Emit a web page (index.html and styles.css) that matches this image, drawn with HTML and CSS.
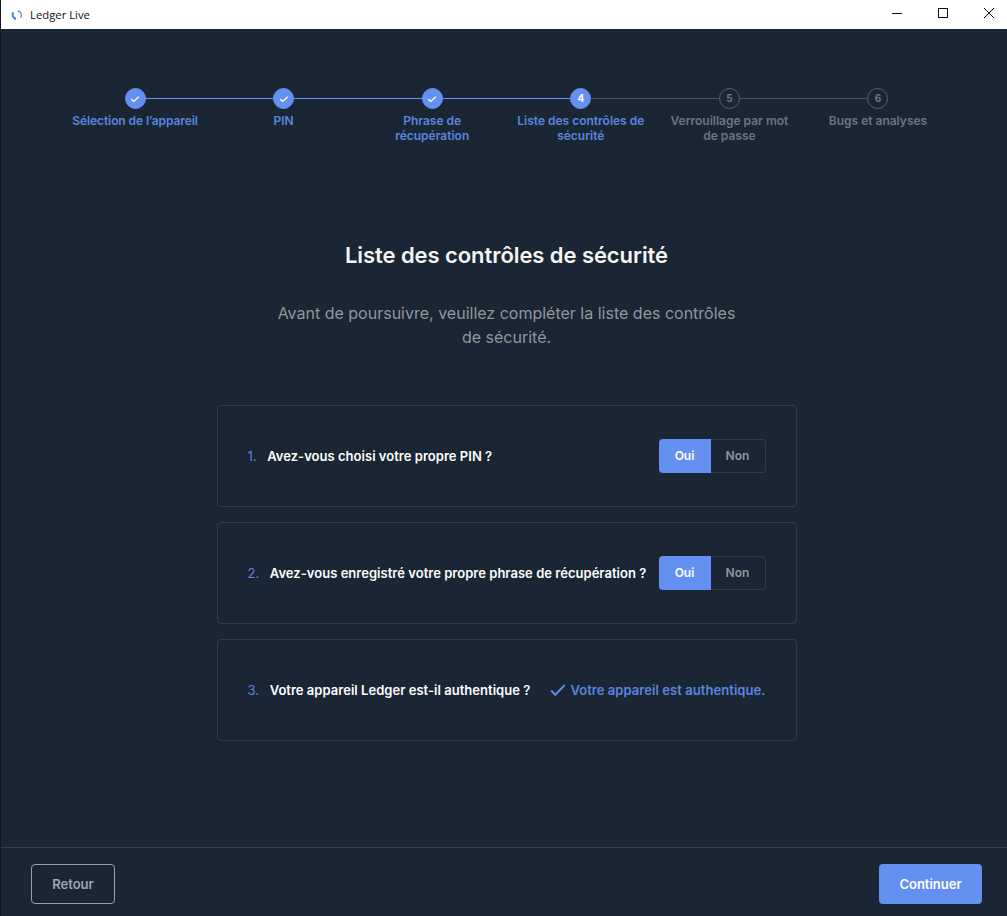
FILE: index.html
```html
<!DOCTYPE html>
<html lang="fr">
<head>
  <meta charset="UTF-8" />
  <meta name="viewport" content="width=device-width, initial-scale=1.0"/>
  <title>Ledger Live</title>
  <link rel="stylesheet" href="styles.css">
</head>
<body>
  <header class="titlebar">
    <div class="titlebar-left">
      <svg class="app-logo" width="12" height="12" viewBox="0 0 12 12" fill="none">
        <path d="M7 2A4.2 4.2 0 0 1 9.6 8.6" stroke="#6f8fd0" stroke-width="1.3"/>
        <path d="M5 10A4.2 4.2 0 0 1 2.4 3.4" stroke="#3f73d8" stroke-width="1.8"/>
      </svg>
      <span>Ledger Live</span>
    </div>
    <div class="window-controls">
      <svg width="12" height="12" viewBox="0 0 12 12"><path d="M1 6.5h10" stroke="#111" stroke-width="1"/></svg>
      <svg width="12" height="12" viewBox="0 0 12 12"><rect x="1.5" y="1.5" width="9" height="9" fill="none" stroke="#111"/></svg>
      <svg width="12" height="12" viewBox="0 0 12 12"><path d="M1 1l10 10M11 1L1 11" stroke="#111" stroke-width="1"/></svg>
    </div>
  </header>

  <main class="content">
    <ol class="stepper">
      <li class="step done">
        <span class="dot"><svg width="10" height="10" viewBox="0 0 10 10"><path d="M1.3 5.2l2.5 2.2 5-4.6" fill="none" stroke="#fff" stroke-width="1.4"/></svg></span>
        <span class="label">Sélection de l’appareil</span>
      </li>
      <li class="step done">
        <span class="dot"><svg width="10" height="10" viewBox="0 0 10 10"><path d="M1.3 5.2l2.5 2.2 5-4.6" fill="none" stroke="#fff" stroke-width="1.4"/></svg></span>
        <span class="label">PIN</span>
      </li>
      <li class="step done">
        <span class="dot"><svg width="10" height="10" viewBox="0 0 10 10"><path d="M1.3 5.2l2.5 2.2 5-4.6" fill="none" stroke="#fff" stroke-width="1.4"/></svg></span>
        <span class="label">Phrase de récupération</span>
      </li>
      <li class="step current">
        <span class="dot">4</span>
        <span class="label">Liste des contrôles de sécurité</span>
      </li>
      <li class="step">
        <span class="dot">5</span>
        <span class="label">Verrouillage par mot de passe</span>
      </li>
      <li class="step">
        <span class="dot">6</span>
        <span class="label">Bugs et analyses</span>
      </li>
    </ol>

    <h1 class="title">Liste des contrôles de sécurité</h1>
    <p class="intro">Avant de poursuivre, veuillez compléter la liste des contrôles de sécurité.</p>

    <div class="checks">
      <div class="card">
        <div class="question"><span class="num">1.</span>Avez-vous choisi votre propre PIN ?</div>
        <div class="toggle"><span class="opt on">Oui</span><span class="opt">Non</span></div>
      </div>
      <div class="card">
        <div class="question"><span class="num">2.</span>Avez-vous enregistré votre propre phrase de récupération ?</div>
        <div class="toggle"><span class="opt on">Oui</span><span class="opt">Non</span></div>
      </div>
      <div class="card">
        <div class="question"><span class="num">3.</span>Votre appareil Ledger est-il authentique ?</div>
        <div class="verified">
          <svg width="16" height="14" viewBox="0 0 16 14"><path d="M2.2 7.5l4 4.2L15.8 2" fill="none" stroke="#5f87e8" stroke-width="2"/></svg>
          Votre appareil est authentique.
        </div>
      </div>
    </div>
  </main>

  <footer class="footer">
    <button class="btn btn-back">Retour</button>
    <button class="btn btn-next">Continuer</button>
  </footer>
</body>
</html>
```

FILE: styles.css
```css
:root {
  --bg: #1a2633;
  --blue: #6490f1;
  --blue-text: #5d84e0;
  --border: #323c48;
  --muted: #90969d;
}
* { box-sizing: border-box; margin: 0; padding: 0; }
html, body { height: 100%; }
body {
  font-family: Inter, "Liberation Sans", sans-serif;
  background: var(--bg);
  color: #fff;
  display: flex;
  flex-direction: column;
  height: 916px;
  overflow: hidden;
  border-left: 1px solid #10171f;
}

.titlebar {
  height: 29px;
  background: #fff;
  color: #111;
  display: flex;
  justify-content: space-between;
  align-items: center;
  flex-shrink: 0;
  margin-left: -1px;
  font-family: "Open Sans", "Liberation Sans", sans-serif;
  font-size: 11.3px;
}
.titlebar-left {
  display: flex;
  align-items: center;
  gap: 7px;
  padding-left: 11px;
}
.window-controls {
  display: flex;
  gap: 34px;
  padding-right: 12px;
  padding-bottom: 3px;
}
.window-controls svg { display: block; }

.content {
  flex: 1;
  display: flex;
  flex-direction: column;
  align-items: center;
  padding: 59px 0 0 5px;
}

.stepper {
  list-style: none;
  display: grid;
  grid-template-columns: repeat(6, 148.6px);
}
.step {
  position: relative;
  display: flex;
  flex-direction: column;
  align-items: center;
  text-align: center;
  font-size: 12px;
  font-weight: 600;
  line-height: 15px;
  color: #6f757d;
}
.step::before {
  content: "";
  position: absolute;
  top: 10px;
  left: 50%;
  width: 100%;
  height: 1px;
  background: #4a525d;
}
.step:last-child::before { display: none; }
.step.done::before { background: var(--blue); }
.dot {
  position: relative;
  width: 21px;
  height: 21px;
  border-radius: 50%;
  border: 1px solid #5a626c;
  background: var(--bg);
  display: flex;
  align-items: center;
  justify-content: center;
  font-size: 10px;
  font-weight: 700;
  margin-bottom: 4px;
}
.dot svg { display: block; }
.done .dot, .current .dot {
  background: var(--blue);
  border-color: var(--blue);
  color: #fff;
}
.done .label, .current .label { color: var(--blue-text); }
.label { max-width: 135px; }
.step:first-child .label { letter-spacing: -0.09px; }

.title {
  margin-top: 97px;
  font-size: 22px;
  font-weight: 600;
  line-height: 30px;
  letter-spacing: -0.07px;
  color: #f4f5f6;
}
.intro {
  margin-top: 31px;
  width: 480px;
  text-align: center;
  font-size: 16px;
  line-height: 24px;
  color: var(--muted);
}

.checks {
  margin-top: 56px;
  width: 580px;
  display: flex;
  flex-direction: column;
  gap: 15px;
}
.card {
  height: 102px;
  border: 1px solid var(--border);
  border-radius: 4px;
  padding: 0 30px;
  display: flex;
  align-items: center;
  justify-content: space-between;
}
.question {
  font-size: 13px;
  font-weight: 600;
  letter-spacing: 0.03px;
  color: #fff;
  white-space: nowrap;
}
.num {
  color: var(--blue-text);
  font-size: 13px;
  font-weight: 400;
  margin-right: 10.6px;
}
.toggle {
  display: flex;
  width: 107px;
  height: 34px;
  flex-shrink: 0;
  border: 1px solid var(--border);
  border-radius: 4px;
  font-size: 12px;
  font-weight: 600;
}
.opt {
  flex: 1;
  display: flex;
  align-items: center;
  justify-content: center;
  padding-bottom: 1px;
  color: var(--muted);
}
.opt.on {
  flex: 0 0 52px;
  margin: -1px 0 -1px -1px;
  background: var(--blue);
  border-radius: 4px 0 0 4px;
  color: #fff;
}
.verified {
  display: flex;
  align-items: center;
  gap: 5px;
  font-size: 13px;
  font-weight: 600;
  letter-spacing: 0.06px;
  color: var(--blue-text);
  white-space: nowrap;
}

.footer {
  height: 69px;
  flex-shrink: 0;
  border-top: 1px solid #36414c;
  padding: 16px 25px 0 30px;
  display: flex;
  justify-content: space-between;
  align-items: flex-start;
}
.btn {
  height: 40px;
  border-radius: 4px;
  font-family: inherit;
  font-size: 13px;
  font-weight: 600;
}
.btn-back {
  width: 84px;
  background: transparent;
  border: 1px solid #97a1ac;
  color: #9ea6b2;
}
.btn-next {
  width: 103px;
  background: var(--blue);
  border: none;
  color: #fff;
}
```
